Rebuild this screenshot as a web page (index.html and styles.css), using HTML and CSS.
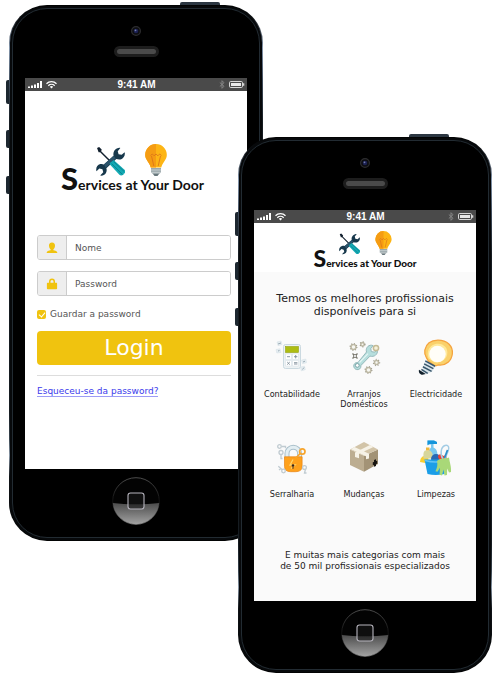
FILE: index.html
```html
<!DOCTYPE html>
<html lang="pt">
<head>
<meta charset="utf-8">
<meta name="viewport" content="width=device-width, initial-scale=1">
<title>Services at Your Door</title>
<link rel="stylesheet" href="styles.css">
</head>
<body>
<svg class="defs" aria-hidden="true">
  <defs>
    <linearGradient id="glass" x1="0" y1="0" x2="0" y2="1"><stop offset="0" stop-color="#4c4c4c"/><stop offset="1" stop-color="#a2a2a2"/></linearGradient>
    <linearGradient id="rim" x1="0" y1="0" x2="0" y2="1"><stop offset="0" stop-color="#555"/><stop offset=".5" stop-color="#111"/><stop offset="1" stop-color="#777"/></linearGradient>
    <symbol id="tools" viewBox="0 0 28 28">
      <path d="M1 1 3 0 5.500 2.500 5 4 15 14 14 15 4 5 2.500 5Z" fill="#12202e"/>
      <path d="M20 1.500c2-1 3-1 3.500-.5L21 4l.8 3 3 .6L27.600 5c1 3-1 6.500-4 7-1.500.2-3 0-4-.4L10 20.500c.8 2.500 0 5-2 6.300-1.500.9-3 1-4 .7l3-3.200-.8-2.800-3-.7L.5 23.500c-1-3 .6-6.300 3.600-7 1.400-.3 2.600-.1 3.500.3L17 8.500c-.8-2.700.5-5.700 3-7Z" fill="#17384c"/>
      <path d="M7.600 16.800 17 8.500l2 2.500-9.500 9Z" fill="#2b536b"/>
      <path d="m14 15 3-2.500L27.500 22c1 1 .8 2.600-.2 3.700l-1 1c-1.200 1-2.700 1-3.700 0L13 16.500Z" fill="#13a9b3"/>
      <path d="m15 16 10.500 10.500M17 14l10 9.500" stroke="#087d8b" stroke-width=".8"/>
    </symbol>
    <symbol id="bulb" viewBox="0 0 22 32">
      <path d="M11 0a10.800 10.800 0 0 0-10.800 10.900c0 4.700 4.300 7.600 5.600 12.600h10.400c1.300-5 5.600-7.900 5.600-12.600A10.800 10.800 0 0 0 11 0Z" fill="#fdb515"/>
      <path d="M11 0a10.800 10.800 0 0 0-10.800 10.900c0 4.700 4.300 7.600 5.600 12.600H11Z" fill="#f59c13"/>
      <path d="m5.500 11.500 1.800-1.500 1.800 1.800L11 10l1.900 1.800 1.800-1.800 1.800 1.500M6.500 12l2.300 10M15.500 12l-2.300 10" fill="none" stroke="#d9701a" stroke-width=".8"/>
      <path d="M6 24h10v4.500l-2 1.500H8l-2-1.500Z" fill="#9aa7ab"/>
      <path d="M6 26h10M6 28.300h10" stroke="#dde2e3" stroke-width=".7"/>
      <path d="M8 30h6l-1.500 2h-3Z" fill="#68777c"/>
    </symbol>
    <symbol id="signal" viewBox="0 0 30 9">
      <path d="M0 6.500h2V8H0ZM3 5.500h2V8H3ZM6 4.500h2V8H6ZM9 3h2v5H9ZM12 1h2v7h-2Z" fill="#fff"/>
      <path d="M18.500 3.800a7 7 0 0 1 10 0M20.300 5.700a4.600 4.600 0 0 1 6.400 0" fill="none" stroke="#fff" stroke-width="1.300"/>
      <path d="m23.500 8.600-1.700-1.800a2.400 2.400 0 0 1 3.400 0Z" fill="#fff"/>
    </symbol>
    <symbol id="power" viewBox="0 0 26 9">
      <path d="M.8 2.500 5 6.300 3 8.300V.7l2 2L.8 6.500" fill="none" stroke="#8b8b8b" stroke-width=".9"/>
      <rect x="10.500" y="1.500" width="13" height="6" rx="1.200" fill="none" stroke="#d8d8d8"/>
      <rect x="12" y="3" width="10" height="3" fill="#e8e8e8"/>
      <path d="M24 3.200h1.300v2.600H24Z" fill="#d8d8d8"/>
    </symbol>
    <symbol id="camera" viewBox="0 0 10 10">
      <circle cx="5" cy="5" r="4.400" fill="#0c0d10" stroke="#2c2c2e" stroke-width="1.200"/>
      <circle cx="5" cy="5" r="2.300" fill="#1c2152"/><circle cx="4.500" cy="4.300" r=".9" fill="#747eaa"/>
    </symbol>
    <symbol id="home" viewBox="0 0 48 48">
      <circle cx="24" cy="24" r="23.300" fill="#030303" stroke="url(#rim)" stroke-width=".9"/>
      <path d="M.8 26c14 1.700 32 1.700 46.400 0a23.300 23.300 0 0 1-46.400 0Z" fill="url(#glass)"/>
      <rect x="16" y="16" width="16" height="16" rx="2.500" fill="#181818" fill-opacity=".6" stroke="#b7b5be" stroke-width="1.100"/>
    </symbol>
  </defs>
</svg>

<main class="stage">
  <section class="phone" aria-label="Login">
    <span class="key key-power"></span><span class="key key-mute"></span><span class="key key-up"></span><span class="key key-down"></span>
    <div class="face">
      <div class="top"><svg class="camera"><use href="#camera"/></svg><span class="speaker"></span></div>
      <div class="screen">
        <div class="status"><svg class="signal"><use href="#signal"/></svg><span>9:41 AM</span><svg class="power"><use href="#power"/></svg></div>
        <div class="login">
          <div class="logo">
            <div class="marks"><svg class="tools"><use href="#tools"/></svg><svg class="bulb"><use href="#bulb"/></svg></div>
            <div class="name"><span class="initial">S</span>ervices at Your Door</div>
          </div>
          <form class="form">
            <div class="field">
              <label for="nome" aria-label="Nome"><svg viewBox="0 0 12 12"><path d="M6 .5c2 0 3.200 1.400 3 3.300C8.900 5.500 8.200 6.800 7.400 7.300v.9c1.700.4 4 .9 4 2.800H.6c0-1.900 2.300-2.400 4-2.800v-.9C3.800 6.800 3.100 5.500 3 3.800 2.800 1.900 4 .5 6 .5Z"/></svg></label>
              <input id="nome" type="text" placeholder="Nome">
            </div>
            <div class="field">
              <label for="pass" aria-label="Password"><svg viewBox="0 0 12 12"><path d="M1.500 4.800H3V3.600a3 3 0 0 1 6 0v1.200h1.500q.6 0 .6.600v5q0 .8-.8.8H1.700q-.8 0-.8-.8v-5q0-.6.600-.6Zm3 0h3V3.600a1.500 1.500 0 0 0-3 0Z"/></svg></label>
              <input id="pass" type="password" placeholder="Password">
            </div>
            <label class="remember"><input type="checkbox" checked>Guardar a password</label>
            <button class="submit" type="button">Login</button>
            <div class="help"><a href="#">Esqueceu-se da password?</a></div>
          </form>
        </div>
      </div>
      <div class="bottom"><svg class="home"><use href="#home"/></svg></div>
    </div>
  </section>

  <section class="phone phone-front" aria-label="Categorias">
    <span class="key key-power"></span><span class="key key-mute"></span><span class="key key-up"></span><span class="key key-down"></span>
    <div class="face">
      <div class="top"><svg class="camera"><use href="#camera"/></svg><span class="speaker"></span></div>
      <div class="screen">
        <div class="status"><svg class="signal"><use href="#signal"/></svg><span>9:41 AM</span><svg class="power"><use href="#power"/></svg></div>
        <header class="bar">
          <div class="logo logo-small">
            <div class="marks"><svg class="tools"><use href="#tools"/></svg><svg class="bulb"><use href="#bulb"/></svg></div>
            <div class="name"><span class="initial">S</span>ervices at Your Door</div>
          </div>
        </header>
        <div class="catalog">
          <h1>Temos os melhores profissionais<br>disponíveis para si</h1>
          <ul class="grid">
            <li><svg viewBox="1 -1 36 36">
              <rect x="10.500" y="4.500" width="17" height="24" rx="2" fill="#edf2f4" stroke="#cbd9e0"/>
              <rect x="12.500" y="6.500" width="13" height="6" fill="#aebd12" stroke="#94a20f" stroke-width=".6"/>
              <path d="M12.500 14h6v5.500h-6ZM19.500 14h6v5.500h-6ZM12.500 20.500h6V26h-6ZM19.500 20.500h6V26h-6Z" fill="#fff" stroke="#d4dfe4" stroke-width=".5"/>
              <path d="M14 16.700h3M21 16.700h3.400M22.700 15v3.400M14.200 22l2.600 2.600M16.800 22l-2.600 2.600M21 22.700h3.400M21 24h3.400" stroke="#7f8d98" stroke-width=".9"/>
              <path d="m4 2 4-1 1 3.500-4 1.200ZM3 9.500l4-.7.800 3.700-4 .5ZM28.500 20l4.300-1 .7 3.700-4 1ZM27.500 27l4-.8.800 3.500-4 1.200Z" fill="#e5edf1" stroke="#d3dfe5" stroke-width=".5"/>
              <path d="m5 4 3-1M5 11l1.500-.5M30 22l2-.8M29.500 29.500l1.500-2" stroke="#899ba7" stroke-width=".8"/>
            </svg><span>Contabilidade</span></li>
            <li><svg viewBox="1 -1 36 36">
              <g fill="#f7f7f2" stroke="#c2bda8" stroke-width="1.600"><circle cx="8.500" cy="7" r="2.500"/><circle cx="17.500" cy="4.300" r="1.700"/><circle cx="31.500" cy="22.500" r="2"/><circle cx="23.500" cy="30" r="2.500"/></g>
              <g fill="none" stroke="#a19e90" stroke-width="1.400" stroke-dasharray=".9 1.700"><circle cx="8.500" cy="7" r="3.300"/><circle cx="17.500" cy="4.300" r="2.400"/><circle cx="31.500" cy="22.500" r="3"/><circle cx="23.500" cy="30" r="3.300"/></g>
              <path d="m7.500 13.500 5 5m0-5-5 5" stroke="#77756b" stroke-width="1.300"/><circle cx="10" cy="16" r="1.600" fill="#eee" stroke="#77756b" stroke-width=".8"/>
              <path d="M21.500 12c-1-3.500 1.200-7 5-6.800l1.500.4-2.200 3 .5 3 3 .5 3.200-2c.5 4.500-3.500 7.300-7.500 6l-9 9.300c.2 3-2 4.700-4.300 4.200-3-.7-4-4.400-1.700-6.300.9-.8 2-1 3-.8Z" fill="#b6dedd" stroke="#8fb3b5" stroke-width=".9"/>
              <path d="m14.500 22.500 8.500-8.800" stroke="#e4f6f4" stroke-width="1.200"/>
              <circle cx="12.300" cy="25.400" r="1.900" fill="#fff" stroke="#719b9e" stroke-width=".9"/>
              <circle cx="31" cy="8" r="2.600" fill="#f5f1da" stroke="#c4ba95" stroke-width="1.500"/>
            </svg><span>Arranjos<br>Domésticos</span></li>
            <li><svg viewBox="0 -2 37 37">
              <path d="M10.500 20.500c-1.700-3.800-4.500-5-3.500-11C8.500 2 14.500-.7 20.500-.8c9.500 0 15.500 6 14.800 14-.7 7-6.300 12.300-14 11.500-1.500 0-2.800 1.200-4 1Z" fill="#fad16b" stroke="#f5a33d" stroke-width="1.300"/>
              <path d="M11 18c-3-7 1-14 8-15s12.500 4.500 11 11c-1.200 5.500-6.500 8.500-13 8Z" fill="#ffe99a"/>
              <ellipse cx="20" cy="13.500" rx="8.500" ry="8.500" fill="#fffef8"/>
              <path d="m7.500 20 10.500 6-3.500 5.500-5.500 2.800-5-3Z" fill="#dbe6ec"/>
              <path d="m7.500 20.500 10 5.500M6.300 23.500l9.500 5M5 26.500l9 4.700M3.500 29.300l6.500 4" stroke="#38566b" stroke-width="1.500"/>
              <path d="m1 29.500 7 4.500-3.500.8c-2.500-.3-4.200-2.600-3.500-5.300Z" fill="#101e2a"/>
            </svg><span>Electricidade</span></li>
            <li><svg viewBox="1 -1 36 36">
              <path d="M14 19v-5.500a6.300 6.300 0 0 1 12.600 0V19" fill="none" stroke="#a9bfca" stroke-width="5"/>
              <path d="M14 19v-5.500a6.300 6.300 0 0 1 12.600 0V19" fill="none" stroke="#e3eef2" stroke-width="3"/>
              <path d="M11.500 16.800h17.600v9.500q0 5.400-6.400 5.400h-5q-6.200 0-6.200-5.400Z" fill="#ffa11c" stroke="#e88413" stroke-width=".7"/>
              <path d="m20 19.500-3 5.500h5l-4 3.500" fill="none" stroke="#ffd369" stroke-width="1.300"/>
              <circle cx="20" cy="25.500" r="1.300" fill="#3b2114"/><path d="m20 26 .8 2.500h-1.600Z" fill="#3b2114"/>
              <circle cx="29.300" cy="11.500" r="2.700" fill="none" stroke="#f7a42b" stroke-width="1.700"/><path d="m27.300 13.500-4.500 4.500" stroke="#f7a42b" stroke-width="1.700"/>
              <g fill="none" stroke="#c0cbd1" stroke-width="1.300"><circle cx="6.500" cy="6.500" r="1.800"/><path d="M8.500 6.500h4v1.800"/><circle cx="8" cy="12.500" r="2"/><path d="M8 14.500v4h1.500"/><circle cx="10.500" cy="31" r="1.800"/><path d="m9.300 29.800-4-3.500M6 30l2-1.500"/><circle cx="31.500" cy="27.500" r="1.900"/><path d="m32.500 29-1 4h2"/></g>
            </svg><span>Serralharia</span></li>
            <li><svg viewBox="1 0 36 36">
              <path d="m5 10.500 14 6.300v16L5 26Z" fill="#bcad91"/>
              <path d="m19 16.800 14-6.300V25l-14 7.800Z" fill="#a39376"/>
              <path d="M5 10.500 19 3l14 7.500-14 6.300Z" fill="#d2c4a8"/>
              <path d="m9.500 8 14.500 6.700v4.700l-3 .8v-3L6 10.200ZM28.500 8 14 14.700v4.500l-4-1.300v-4.400l15-7.500Z" fill="#f6f2e7"/>
              <path d="m29 21 2-.8V22l1.200-.3v3L31 25v2l-2 .8v-2l-1.200.5v-3L29 23Z" fill="#151310"/>
            </svg><span>Mudanças</span></li>
            <li><svg viewBox="1 0 36 36">
              <path d="M10.500 1.500h6.500l3 1.500v2h-3.500v3.500c3.500 1.500 4 4.500 4 9h-9c0-4 0-7 2.500-9V5.500h-1.500l-2 1Z" fill="#79c8ef"/>
              <path d="M10.500 1.500h6.500l3 1.500v2H12.500l-2 1Z" fill="#1595db"/>
              <path d="M3 23c.5-5 2.500-6 5.500-6l3 2.500-.5 5Z" fill="#f9cf30"/>
              <path d="M8 11.500h5c2.500 2 3 4 3 8H6.500c0-4-.5-6 1.500-8Z" fill="#d7d69b"/><path d="M9 8.500h3.500v3H9Z" fill="#edb83c"/>
              <circle cx="19" cy="20" r="5" fill="#2869b3"/>
              <path d="M21 18c0-4 4-3 5-1l3.500-1v5h-7Z" fill="#e94238"/>
              <path d="M26 20c-3-4-2.500-12 2-13.500 3.500-1 4.500 2 3.300 5L28 20" fill="none" stroke="#a3cce4" stroke-width="1.500"/><path d="m27.500 19 3-8" stroke="#2d8fc9" stroke-width="1.800"/>
              <path d="M7.500 20.500h23L27.500 35q-9 2-17 0Z" fill="#1b9ee8"/><path d="M7.500 20.500q11 3.500 22.500 0l-.4 1.800q-11 3-21.700 0Z" fill="#61c3f5"/>
              <path d="M20 22c3-3.500 8.500-2 12-3.500.8 6 2.500 9 2 14.500l-2 .5-1.800-4-.2 6.500-2.500.5-1-6-1.500 6-2.500-.7.5-7-2.500 4-2-.6c1.800-4 2.300-6 1.500-10.200Z" fill="#a9d878"/>
            </svg><span>Limpezas</span></li>
          </ul>
          <p>E muitas mais categorias com mais<br>de 50 mil profissionais especializados</p>
        </div>
      </div>
      <div class="bottom"><svg class="home"><use href="#home"/></svg></div>
    </div>
  </section>
</main>
</body>
</html>
```
FILE: styles.css
```css
* { box-sizing: border-box; }
body {
  margin: 0;
  background: #fff;
  color: #222;
  font-family: "DejaVu Sans", Verdana, sans-serif;
  font-size: 9px;
}
svg { display: block; overflow: visible; }
.defs { position: absolute; width: 0; height: 0; }

.stage {
  display: flex;
  align-items: flex-start;
  padding: 5px 8px 16px 9px;
}

/* Phone shell */
.phone {
  position: relative;
  flex: 1 1 0;
  padding: 3px;
  border-radius: 38px;
  background: linear-gradient(#020303 0, #0b0e11 2%, #8496ac 8%, #435060 14%, #161c21 22%, #161c21 76%, #3a4650 81%, #8896a5 84%, #101418 88%, #020303 100%);
}
.phone-front { margin: 132px 0 0 -25px; }
.face {
  border: 1px solid #222b32;
  border-radius: 35px;
  background: #000;
  box-shadow: 0 0 0 2px #07090b;
  padding: 0 12px;
}
.key {
  position: absolute;
  left: -3px;
  width: 3px;
  height: 18px;
  border-radius: 2px 0 0 2px;
  background: #1d2730;
}
.key-power {
  top: -3px;
  left: auto;
  right: 43px;
  width: 40px;
  height: 3px;
  border-radius: 2px 2px 0 0;
  background: #2c3742;
}
.key-mute { top: 75px; height: 24px; }
.key-up { top: 125px; }
.key-down { top: 171px; }

.top {
  display: flex;
  flex-direction: column;
  align-items: center;
  gap: 10px;
  height: 69px;
  padding-top: 17px;
}
.camera { width: 10px; height: 10px; }
.speaker {
  width: 45px;
  height: 11px;
  border: 3px solid #1d1d1d;
  border-radius: 6px;
  background: #4a4a4a;
}
.bottom {
  display: flex;
  justify-content: center;
  height: 68px;
  padding-top: 8px;
}
.home { width: 48px; height: 48px; }

.screen {
  display: flex;
  flex-direction: column;
  min-height: 391px;
  background: #fff;
}
.status {
  display: grid;
  grid-template-columns: 1fr auto 1fr;
  align-items: center;
  height: 13px;
  padding: 0 2px 0 3px;
  background: #4a4a4a;
  color: #fff;
  font: bold 10px/13px "Liberation Sans", Arial, sans-serif;
}
.signal { width: 30px; height: 9px; }
.power { width: 26px; height: 9px; justify-self: end; }

/* Brand */
.logo {
  width: max-content;
  color: #111;
  font-family: Lato, "Open Sans", sans-serif;
}
.marks {
  display: flex;
  align-items: flex-end;
  gap: 20px;
  padding-left: 35px;
}
.tools { width: 29px; height: 29px; }
.bulb { width: 22px; height: 32px; }
.name { font-size: 14px; font-weight: 700; line-height: 18px; }
.initial { font-size: 31px; font-weight: 900; line-height: 0; }
.logo-small .marks { gap: 15px; padding-left: 26px; }
.logo-small .tools { width: 21px; height: 22px; }
.logo-small .bulb { width: 17px; height: 24px; }
.logo-small .name { font-size: 10px; font-weight: 900; line-height: 16px; }
.logo-small .initial { font-size: 23px; }

/* Login screen */
.login {
  display: flex;
  flex-direction: column;
  padding: 53px 16px 0 12px;
}
.login .logo { margin: 0 0 41px 24px; }
.form { display: flex; flex-direction: column; color: #555; }
.field {
  display: flex;
  height: 25px;
  margin-bottom: 11px;
  overflow: hidden;
  border: 1px solid #ccc;
  border-radius: 3px;
}
.field label {
  display: flex;
  align-items: center;
  justify-content: center;
  width: 29px;
  background: #eee;
  border-right: 1px solid #ccc;
}
.field svg { width: 12px; height: 12px; fill: #f0c30f; }
.field input {
  flex: 1;
  min-width: 0;
  padding: 0 8px;
  border: 0;
  background: #fff;
  color: #555;
  font: 9px "DejaVu Sans", Verdana, sans-serif;
}
.field input::placeholder { color: #555; opacity: 1; }
.remember {
  display: flex;
  align-items: center;
  gap: 4px;
  height: 14px;
}
.remember input {
  display: grid;
  place-items: center;
  appearance: none;
  width: 9px;
  height: 9px;
  margin: 0;
  border-radius: 2px;
  background: #f0c30f;
}
.remember input:checked::before {
  content: "";
  width: 3px;
  height: 5px;
  border: solid #fff;
  border-width: 0 1px 1px 0;
  transform: rotate(40deg);
}
.submit {
  height: 34px;
  margin-top: 10px;
  padding: 0;
  border: 0;
  border-radius: 4px;
  background: #f0c30f;
  color: #fff;
  font: 22px/32px "DejaVu Sans", Verdana, sans-serif;
}
.help {
  margin-top: 10px;
  padding-top: 9px;
  border-top: 1px solid #ddd;
  line-height: 12px;
}
.help a {
  color: #3a3aec;
  text-decoration: none;
  border-bottom: 1px solid #9c9cf5;
}

/* Category screen */
.bar { display: flex; justify-content: center; padding: 8px 0 1px; }
.catalog { flex: 1; background: #fafafa; text-align: center; }
h1 {
  margin: 0;
  padding-top: 20px;
  font-size: 11px;
  font-weight: normal;
  line-height: 13px;
}
.grid {
  display: grid;
  grid-template-columns: repeat(3, 1fr);
  grid-auto-rows: 100px;
  margin: 0 4px 0 2px;
  padding: 21px 0 0;
  list-style: none;
  font-family: "DejaVu Sans Condensed", "DejaVu Sans", sans-serif;
  line-height: 10px;
}
.grid li { display: flex; flex-direction: column; align-items: center; gap: 14px; }
.grid svg { width: 36px; height: 36px; }
.catalog p { margin: 0; padding-top: 11px; line-height: 11px; }
```
